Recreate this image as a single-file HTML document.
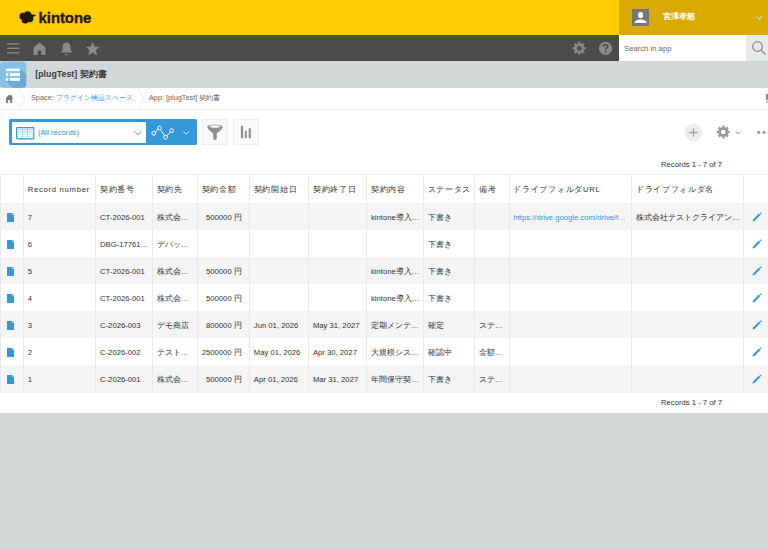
<!DOCTYPE html>
<html><head><meta charset="utf-8">
<style>
*{box-sizing:border-box;margin:0;padding:0}
html,body{width:768px;height:549px;overflow:hidden;background:#d4d7d7;font-family:"Liberation Sans",sans-serif;color:#333}
div,span,svg{position:absolute}
.t{white-space:nowrap;font-size:7.7px;line-height:10px}
.h{white-space:nowrap;font-size:7.7px;line-height:10px;letter-spacing:0.7px;color:#333}
</style></head><body>

<div style="left:0;top:0;width:768px;height:35px;background:#ffcc00"></div>
<div style="left:619px;top:0;width:149px;height:35px;background:#d9ab00"></div>
<svg style="left:19px;top:11px" width="19" height="14" viewBox="0 0 19 14"><g fill="#231815"><circle cx="3.9" cy="5.2" r="3.5"/><circle cx="8.6" cy="4" r="3.7"/><circle cx="10.8" cy="7.6" r="3.6"/><circle cx="6.2" cy="9" r="3.6"/><circle cx="7.5" cy="6.5" r="4"/><path d="M11.5 3 L17.3 4.3 L12.5 6.8Z"/></g></svg>
<div class="t" style="left:38.6px;top:9.6px;font-size:14.9px;line-height:17px;font-weight:bold;color:#231815;letter-spacing:-0.05px;-webkit-text-stroke:0.35px #231815">kintone</div>
<div style="left:632.1px;top:9px;width:17.1px;height:16.8px;background:#757575"></div>
<svg style="left:632px;top:9px" width="18" height="17" viewBox="0 0 18 17"><ellipse cx="8.6" cy="6.1" rx="2.6" ry="3.2" fill="#fff"/><path d="M2.4 14 C2.8 11.6 5 10.9 7 10.4 L10.2 10.4 C12.2 10.9 14.4 11.6 14.8 14Z" fill="#fff"/></svg>
<div class="t" style="left:663px;top:12px;font-size:8.2px;color:#fff;font-weight:bold">宮澤孝慈</div>
<svg style="left:755px;top:15px" width="9" height="6" viewBox="0 0 9 6"><path d="M0.8 0.8 L4.2 4.2 L7.6 0.8" stroke="#fff" stroke-width="1" fill="none"/></svg>
<div style="left:0;top:35px;width:768px;height:26px;background:#4b4b4b"></div>
<svg style="left:6.9px;top:42px" width="13" height="12" viewBox="0 0 13 12"><path d="M0 1.9h12.4M0 6.3h12.4M0 10.8h12.4" stroke="#8a8a8a" stroke-width="1.2"/></svg>
<svg style="left:33px;top:41.5px" width="13" height="13" viewBox="0 0 13 13"><path d="M6.5 0.5 L12.5 5.5 L12.5 13 L8.3 13 L8.3 9 Q6.5 7.5 4.7 9 L4.7 13 L0.5 13 L0.5 5.5Z" fill="#8a8a8a"/></svg>
<svg style="left:59.5px;top:41.5px" width="13" height="14" viewBox="0 0 13 14"><path d="M6.5 0.5 C9.5 0.5 10.5 3 10.5 5.5 L10.5 8.5 L12.5 10.5 L0.5 10.5 L2.5 8.5 L2.5 5.5 C2.5 3 3.5 0.5 6.5 0.5Z" fill="#8a8a8a"/><path d="M4.8 12 L8.2 12 L6.5 13.5Z" fill="#8a8a8a"/></svg>
<svg style="left:85.5px;top:41.8px" width="14" height="14" viewBox="0 0 14 14"><path d="M6.7 0.4 L8.5 4.9 L13.2 5.1 L9.5 8.2 L10.8 13 L6.7 10.3 L2.6 13 L3.9 8.2 L0.2 5.1 L4.9 4.9Z" fill="#8a8a8a" stroke="#8a8a8a" stroke-width="0.5" stroke-linejoin="round"/></svg>
<svg style="left:570px;top:39px" width="18" height="18" viewBox="0 0 18 18"><path d="M15.80 8.17 L15.80 10.43 L14.05 10.52 L13.52 11.79 L14.70 13.10 L13.10 14.70 L11.79 13.52 L10.52 14.05 L10.43 15.80 L8.17 15.80 L8.08 14.05 L6.81 13.52 L5.50 14.70 L3.90 13.10 L5.08 11.79 L4.55 10.52 L2.80 10.43 L2.80 8.17 L4.55 8.08 L5.08 6.81 L3.90 5.50 L5.50 3.90 L6.81 5.08 L8.08 4.55 L8.17 2.80 L10.43 2.80 L10.52 4.55 L11.79 5.08 L13.10 3.90 L14.70 5.50 L13.52 6.81 L14.05 8.08Z" fill="#8a8a8a"/><circle cx="9.3" cy="9.3" r="2.4" fill="#4b4b4b"/></svg>
<svg style="left:598px;top:41px" width="15" height="15" viewBox="0 0 15 15"><circle cx="7.5" cy="7.3" r="6.6" fill="#8a8a8a"/><path d="M5.2 5.6 C5.2 3.2 9.8 3.2 9.8 5.6 C9.8 7.2 7.6 7.2 7.6 8.8" stroke="#4b4b4b" stroke-width="1.6" fill="none"/><circle cx="7.6" cy="11" r="1" fill="#4b4b4b"/></svg>
<div style="left:619px;top:35px;width:127px;height:26px;background:#fff"></div>
<div class="t" style="left:624px;top:44px;font-size:7.7px;color:#666">Search in app</div>
<div style="left:746px;top:35px;width:22px;height:26px;background:#e8e9e9"></div>
<svg style="left:751px;top:40px" width="16" height="16" viewBox="0 0 16 16"><circle cx="6.5" cy="6.5" r="4.8" stroke="#8a8a8a" stroke-width="1.2" fill="none"/><path d="M10 10 L14.5 14.5" stroke="#8a8a8a" stroke-width="1.4"/></svg>
<div style="left:0;top:61px;width:768px;height:27px;background:#d4d7d7"></div>
<svg style="left:0;top:61px" width="27" height="27" viewBox="0 0 27 27"><defs><clipPath id="cp"><rect x="0" y="0.4" width="26.3" height="26.3" rx="3.6"/></clipPath></defs><g clip-path="url(#cp)"><rect x="0" y="0" width="27" height="27" fill="#85c1e8"/><path d="M20.1 7.6 L50 37.5 L36 50 L5.9 19.8 L20.1 19.8Z" fill="#6ea8d3"/></g><g fill="#fff"><rect x="5.9" y="7.6" width="14.2" height="2.5"/><rect x="5.9" y="12.2" width="2.3" height="2.7"/><rect x="9.9" y="12.2" width="10.2" height="2.7"/><rect x="5.9" y="16.9" width="2.3" height="2.9"/><rect x="9.9" y="16.9" width="10.2" height="2.9"/></g></svg>
<div class="t" style="left:35.3px;top:69.4px;font-size:8.8px;line-height:11px;font-weight:bold;color:#3a3a3a">[plugTest] 契約書</div>
<div style="left:0;top:88px;width:768px;height:22px;background:#fff"></div>
<div style="left:0;top:109px;width:768px;height:1.3px;background:#edf0f0"></div>
<svg style="left:5px;top:94px" width="9" height="10" viewBox="0 0 9 10"><path d="M3.2 1.2 L7 1.2 L7 2.6 L8.1 4.6 L7.1 4.6 L7.1 8.9 L5.2 8.9 L5.2 6 L2.9 6 L2.9 8.9 L1.1 8.9 L1.1 4.6 L0.7 4.6Z" fill="#7a7a7a"/></svg>
<svg style="left:18px;top:88px" width="8" height="22" viewBox="0 0 8 22"><path d="M0.5 0 L7 11 L0.5 22" stroke="#e3e6e7" stroke-width="0.9" fill="none"/></svg>
<div class="t" style="left:31px;top:93px;font-size:7.3px;color:#666">Space: <span style="position:static;color:#3498db">プラグイン検証スペース</span></div>
<svg style="left:136.5px;top:88px" width="8" height="22" viewBox="0 0 8 22"><path d="M0.5 0 L7 11 L0.5 22" stroke="#e3e6e7" stroke-width="0.9" fill="none"/></svg>
<div class="t" style="left:149px;top:93px;font-size:7.3px;color:#666">App: [plugTest] 契約書</div>
<div style="left:765.8px;top:94px;width:3px;height:6px;background:#8a8a8a"></div><div style="left:766.2px;top:100.5px;width:2px;height:2.8px;background:#c4c4c4"></div>
<div style="left:0;top:110px;width:768px;height:303px;background:#fff"></div>
<div style="left:9px;top:119.2px;width:188px;height:26px;background:#3498db;border-radius:1.5px"></div>
<div style="left:12px;top:122px;width:134.4px;height:20.5px;background:#fff"></div>
<svg style="left:16px;top:127px" width="19" height="13" viewBox="0 0 19 13"><rect x="0.6" y="0.6" width="17.2" height="11.3" rx="0.8" fill="#fff" stroke="#3498db" stroke-width="1.2"/><rect x="1.2" y="2.2" width="16" height="3" fill="#dcebf7"/><path d="M1.2 2.2H17.2M1.2 5.3H17.2M1.2 7.3H17.2M1.2 9.3H17.2" stroke="#a9d0ee" stroke-width="0.6"/><path d="M6.5 0.6V11.9M11.5 0.6V11.9" stroke="#8fc2ea" stroke-width="0.6"/></svg>
<div class="t" style="left:38px;top:128px;font-size:7.6px;color:#3498db">(All records)</div>
<svg style="left:133.5px;top:130.7px" width="8" height="5" viewBox="0 0 8 5"><path d="M0.6 0.6 L3.9 3.9 L7.2 0.6" stroke="#3498db" stroke-width="0.85" fill="none"/></svg>
<svg style="left:151px;top:125px" width="25" height="16" viewBox="0 0 25 16"><path d="M2.8 8.3 L8.5 2.9 L14.5 12.3 L20.7 5.6" stroke="#fff" stroke-width="1" fill="none"/><g fill="#3498db" stroke="#fff" stroke-width="1"><circle cx="2.8" cy="8.3" r="1.9"/><circle cx="8.5" cy="2.9" r="1.9"/><circle cx="14.5" cy="12.3" r="1.9"/><circle cx="20.7" cy="5.6" r="1.9"/></g></svg>
<svg style="left:182.5px;top:131px" width="7" height="4" viewBox="0 0 7 4"><path d="M0.5 0.5 L3.3 3.3 L6.1 0.5" stroke="#fff" stroke-width="0.9" fill="none"/></svg>
<div style="left:202.2px;top:119px;width:25.6px;height:26.4px;background:#f7f9fa;border:1px solid #eceeef"></div>
<svg style="left:207px;top:124px" width="16" height="17" viewBox="0 0 16 17"><path d="M0.3 3 Q0.6 5.5 6.2 9.2 L6.2 14.6 Q6.2 15.9 8 15.9 Q9.8 15.9 9.8 14.6 L9.8 9.2 Q15.4 5.5 15.7 3Z" fill="#8f8f8f"/><ellipse cx="8" cy="2.8" rx="7.7" ry="2.3" fill="#8f8f8f"/><ellipse cx="8" cy="2.6" rx="5.2" ry="1.25" fill="#fafafa"/></svg>
<div style="left:232.6px;top:119px;width:26.1px;height:26.4px;background:#f7f9fa;border:1px solid #eceeef"></div>
<svg style="left:240px;top:125px" width="12" height="14" viewBox="0 0 12 14"><g fill="#8f8f8f"><rect x="0.9" y="0.8" width="2.2" height="12.4"/><rect x="4.8" y="5.7" width="2" height="7.5"/><rect x="8.7" y="3.3" width="2.2" height="9.9"/></g></svg>
<svg style="left:684.3px;top:122.5px" width="19" height="19" viewBox="0 0 19 19"><circle cx="9.5" cy="9.5" r="8.9" fill="#ededed"/><path d="M9.5 5.2V13.8M5.2 9.5H13.8" stroke="#a0a0a0" stroke-width="1.3"/></svg>
<svg style="left:715px;top:124px" width="17" height="17" viewBox="0 0 17 17"><path d="M14.80 6.87 L14.80 9.13 L13.14 9.24 L12.60 10.55 L13.70 11.80 L12.10 13.40 L10.85 12.30 L9.54 12.84 L9.43 14.50 L7.17 14.50 L7.06 12.84 L5.75 12.30 L4.50 13.40 L2.90 11.80 L4.00 10.55 L3.46 9.24 L1.80 9.13 L1.80 6.87 L3.46 6.76 L4.00 5.45 L2.90 4.20 L4.50 2.60 L5.75 3.70 L7.06 3.16 L7.17 1.50 L9.43 1.50 L9.54 3.16 L10.85 3.70 L12.10 2.60 L13.70 4.20 L12.60 5.45 L13.14 6.76Z" fill="#9a9a9a"/><circle cx="8.3" cy="8" r="2.3" fill="#fff"/></svg>
<svg style="left:734.7px;top:130.7px" width="6" height="4" viewBox="0 0 6 4"><path d="M0.6 0.6 L2.9 2.9 L5.2 0.6" stroke="#999" stroke-width="1" fill="none"/></svg>
<svg style="left:756px;top:129px" width="14" height="6" viewBox="0 0 14 6"><circle cx="2.7" cy="3.3" r="1.6" fill="#9a9a9a"/><circle cx="8" cy="3.3" r="1.6" fill="#9a9a9a"/><circle cx="13.3" cy="3.3" r="1.6" fill="#9a9a9a"/></svg>
<div class="t" style="left:661px;top:159.6px;font-size:7.7px;color:#333">Records 1 - 7 of 7</div>
<div style="left:0;top:174.0px;width:768px;height:29.3px;background:#fff"></div>
<div style="left:0;top:203.3px;width:768px;height:27.0px;background:#f4f4f4"></div>
<div style="left:0;top:230.3px;width:768px;height:27.0px;background:#fff"></div>
<div style="left:0;top:257.3px;width:768px;height:27.0px;background:#f4f4f4"></div>
<div style="left:0;top:284.3px;width:768px;height:27.0px;background:#fff"></div>
<div style="left:0;top:311.3px;width:768px;height:27.0px;background:#f4f4f4"></div>
<div style="left:0;top:338.3px;width:768px;height:27.0px;background:#fff"></div>
<div style="left:0;top:365.3px;width:768px;height:27.0px;background:#f4f4f4"></div>
<div style="left:0;top:173.5px;width:768px;height:1px;background:#eef0f1"></div>
<div style="left:0;top:202.8px;width:768px;height:1px;background:#eef0f1"></div>
<div style="left:0;top:391.8px;width:768px;height:1px;background:#eef0f1"></div>
<div style="left:-0.5px;top:174.0px;width:1px;height:218.3px;background:#e7eaec"></div>
<div style="left:22.9px;top:174.0px;width:1px;height:218.3px;background:#e7eaec"></div>
<div style="left:95.1px;top:174.0px;width:1px;height:218.3px;background:#e7eaec"></div>
<div style="left:151.8px;top:174.0px;width:1px;height:218.3px;background:#e7eaec"></div>
<div style="left:196.8px;top:174.0px;width:1px;height:218.3px;background:#e7eaec"></div>
<div style="left:248.9px;top:174.0px;width:1px;height:218.3px;background:#e7eaec"></div>
<div style="left:308.0px;top:174.0px;width:1px;height:218.3px;background:#e7eaec"></div>
<div style="left:366.1px;top:174.0px;width:1px;height:218.3px;background:#e7eaec"></div>
<div style="left:422.8px;top:174.0px;width:1px;height:218.3px;background:#e7eaec"></div>
<div style="left:474.1px;top:174.0px;width:1px;height:218.3px;background:#e7eaec"></div>
<div style="left:508.5px;top:174.0px;width:1px;height:218.3px;background:#e7eaec"></div>
<div style="left:631.0px;top:174.0px;width:1px;height:218.3px;background:#e7eaec"></div>
<div style="left:743.0px;top:174.0px;width:1px;height:218.3px;background:#e7eaec"></div>
<div class="h" style="left:27.8px;top:184.6px">Record number</div>
<div class="h" style="left:100.0px;top:184.6px">契約番号</div>
<div class="h" style="left:156.7px;top:184.6px">契約先</div>
<div class="h" style="left:201.7px;top:184.6px">契約金額</div>
<div class="h" style="left:253.8px;top:184.6px">契約開始日</div>
<div class="h" style="left:312.9px;top:184.6px">契約終了日</div>
<div class="h" style="left:371.0px;top:184.6px">契約内容</div>
<div class="h" style="left:427.7px;top:184.6px">ステータス</div>
<div class="h" style="left:479.0px;top:184.6px">備考</div>
<div class="h" style="left:513.4px;top:184.6px">ドライブフォルダURL</div>
<div class="h" style="left:635.9px;top:184.6px">ドライブフォルダ名</div>
<svg style="left:7px;top:213.1px" width="8" height="10" viewBox="0 0 8 10"><path d="M0 0 L5.1 0 L7 1.9 L7 9.1 L0 9.1Z" fill="#3498db"/><circle cx="5.3" cy="1.6" r="0.55" fill="#bfe0f5"/></svg>
<svg style="left:751.5px;top:211.6px" width="10" height="10" viewBox="0 0 10 10"><path d="M0.5 9.5 L1.1 7.4 L6.9 1.6 L8.4 3.1 L2.6 8.9Z" fill="#3498db"/><path d="M7.5 1 L8.3 0.2 L9.8 1.7 L9 2.5Z" fill="#3498db"/></svg>
<div class="t" style="left:27.8px;top:212.9px;color:#333">7</div>
<div class="t" style="left:100.0px;top:212.9px;color:#333">CT-2026-001</div>
<div class="t" style="left:156.7px;top:212.9px;color:#333">株式会…</div>
<div class="t" style="left:197.3px;width:44.5px;top:212.9px;text-align:right">500000 円</div>
<div class="t" style="left:371.0px;top:212.9px;color:#333">kintone導入…</div>
<div class="t" style="left:427.7px;top:212.9px;color:#333">下書き</div>
<div class="t" style="left:513.4px;top:212.9px;color:#3498db">https://drive.google.com/drive/f…</div>
<div class="t" style="left:635.9px;top:212.9px;color:#333">株式会社テストクライアン…</div>
<svg style="left:7px;top:240.1px" width="8" height="10" viewBox="0 0 8 10"><path d="M0 0 L5.1 0 L7 1.9 L7 9.1 L0 9.1Z" fill="#3498db"/><circle cx="5.3" cy="1.6" r="0.55" fill="#bfe0f5"/></svg>
<svg style="left:751.5px;top:238.6px" width="10" height="10" viewBox="0 0 10 10"><path d="M0.5 9.5 L1.1 7.4 L6.9 1.6 L8.4 3.1 L2.6 8.9Z" fill="#3498db"/><path d="M7.5 1 L8.3 0.2 L9.8 1.7 L9 2.5Z" fill="#3498db"/></svg>
<div class="t" style="left:27.8px;top:239.9px;color:#333">6</div>
<div class="t" style="left:100.0px;top:239.9px;color:#333">DBG-17761…</div>
<div class="t" style="left:156.7px;top:239.9px;color:#333">デバッ…</div>
<div class="t" style="left:427.7px;top:239.9px;color:#333">下書き</div>
<svg style="left:7px;top:267.1px" width="8" height="10" viewBox="0 0 8 10"><path d="M0 0 L5.1 0 L7 1.9 L7 9.1 L0 9.1Z" fill="#3498db"/><circle cx="5.3" cy="1.6" r="0.55" fill="#bfe0f5"/></svg>
<svg style="left:751.5px;top:265.6px" width="10" height="10" viewBox="0 0 10 10"><path d="M0.5 9.5 L1.1 7.4 L6.9 1.6 L8.4 3.1 L2.6 8.9Z" fill="#3498db"/><path d="M7.5 1 L8.3 0.2 L9.8 1.7 L9 2.5Z" fill="#3498db"/></svg>
<div class="t" style="left:27.8px;top:266.9px;color:#333">5</div>
<div class="t" style="left:100.0px;top:266.9px;color:#333">CT-2026-001</div>
<div class="t" style="left:156.7px;top:266.9px;color:#333">株式会…</div>
<div class="t" style="left:197.3px;width:44.5px;top:266.9px;text-align:right">500000 円</div>
<div class="t" style="left:371.0px;top:266.9px;color:#333">kintone導入…</div>
<div class="t" style="left:427.7px;top:266.9px;color:#333">下書き</div>
<svg style="left:7px;top:294.1px" width="8" height="10" viewBox="0 0 8 10"><path d="M0 0 L5.1 0 L7 1.9 L7 9.1 L0 9.1Z" fill="#3498db"/><circle cx="5.3" cy="1.6" r="0.55" fill="#bfe0f5"/></svg>
<svg style="left:751.5px;top:292.6px" width="10" height="10" viewBox="0 0 10 10"><path d="M0.5 9.5 L1.1 7.4 L6.9 1.6 L8.4 3.1 L2.6 8.9Z" fill="#3498db"/><path d="M7.5 1 L8.3 0.2 L9.8 1.7 L9 2.5Z" fill="#3498db"/></svg>
<div class="t" style="left:27.8px;top:293.9px;color:#333">4</div>
<div class="t" style="left:100.0px;top:293.9px;color:#333">CT-2026-001</div>
<div class="t" style="left:156.7px;top:293.9px;color:#333">株式会…</div>
<div class="t" style="left:197.3px;width:44.5px;top:293.9px;text-align:right">500000 円</div>
<div class="t" style="left:371.0px;top:293.9px;color:#333">kintone導入…</div>
<div class="t" style="left:427.7px;top:293.9px;color:#333">下書き</div>
<svg style="left:7px;top:321.1px" width="8" height="10" viewBox="0 0 8 10"><path d="M0 0 L5.1 0 L7 1.9 L7 9.1 L0 9.1Z" fill="#3498db"/><circle cx="5.3" cy="1.6" r="0.55" fill="#bfe0f5"/></svg>
<svg style="left:751.5px;top:319.6px" width="10" height="10" viewBox="0 0 10 10"><path d="M0.5 9.5 L1.1 7.4 L6.9 1.6 L8.4 3.1 L2.6 8.9Z" fill="#3498db"/><path d="M7.5 1 L8.3 0.2 L9.8 1.7 L9 2.5Z" fill="#3498db"/></svg>
<div class="t" style="left:27.8px;top:320.9px;color:#333">3</div>
<div class="t" style="left:100.0px;top:320.9px;color:#333">C-2026-003</div>
<div class="t" style="left:156.7px;top:320.9px;color:#333">デモ商店</div>
<div class="t" style="left:197.3px;width:44.5px;top:320.9px;text-align:right">800000 円</div>
<div class="t" style="left:253.8px;top:320.9px;color:#333">Jun 01, 2026</div>
<div class="t" style="left:312.9px;top:320.9px;color:#333">May 31, 2027</div>
<div class="t" style="left:371.0px;top:320.9px;color:#333">定期メンテ…</div>
<div class="t" style="left:427.7px;top:320.9px;color:#333">確定</div>
<div class="t" style="left:479.0px;top:320.9px;color:#333">ステ…</div>
<svg style="left:7px;top:348.1px" width="8" height="10" viewBox="0 0 8 10"><path d="M0 0 L5.1 0 L7 1.9 L7 9.1 L0 9.1Z" fill="#3498db"/><circle cx="5.3" cy="1.6" r="0.55" fill="#bfe0f5"/></svg>
<svg style="left:751.5px;top:346.6px" width="10" height="10" viewBox="0 0 10 10"><path d="M0.5 9.5 L1.1 7.4 L6.9 1.6 L8.4 3.1 L2.6 8.9Z" fill="#3498db"/><path d="M7.5 1 L8.3 0.2 L9.8 1.7 L9 2.5Z" fill="#3498db"/></svg>
<div class="t" style="left:27.8px;top:347.9px;color:#333">2</div>
<div class="t" style="left:100.0px;top:347.9px;color:#333">C-2026-002</div>
<div class="t" style="left:156.7px;top:347.9px;color:#333">テスト…</div>
<div class="t" style="left:197.3px;width:44.5px;top:347.9px;text-align:right">2500000 円</div>
<div class="t" style="left:253.8px;top:347.9px;color:#333">May 01, 2026</div>
<div class="t" style="left:312.9px;top:347.9px;color:#333">Apr 30, 2027</div>
<div class="t" style="left:371.0px;top:347.9px;color:#333">大規模シス…</div>
<div class="t" style="left:427.7px;top:347.9px;color:#333">確認中</div>
<div class="t" style="left:479.0px;top:347.9px;color:#333">金額…</div>
<svg style="left:7px;top:375.1px" width="8" height="10" viewBox="0 0 8 10"><path d="M0 0 L5.1 0 L7 1.9 L7 9.1 L0 9.1Z" fill="#3498db"/><circle cx="5.3" cy="1.6" r="0.55" fill="#bfe0f5"/></svg>
<svg style="left:751.5px;top:373.6px" width="10" height="10" viewBox="0 0 10 10"><path d="M0.5 9.5 L1.1 7.4 L6.9 1.6 L8.4 3.1 L2.6 8.9Z" fill="#3498db"/><path d="M7.5 1 L8.3 0.2 L9.8 1.7 L9 2.5Z" fill="#3498db"/></svg>
<div class="t" style="left:27.8px;top:374.9px;color:#333">1</div>
<div class="t" style="left:100.0px;top:374.9px;color:#333">C-2026-001</div>
<div class="t" style="left:156.7px;top:374.9px;color:#333">株式会…</div>
<div class="t" style="left:197.3px;width:44.5px;top:374.9px;text-align:right">500000 円</div>
<div class="t" style="left:253.8px;top:374.9px;color:#333">Apr 01, 2026</div>
<div class="t" style="left:312.9px;top:374.9px;color:#333">Mar 31, 2027</div>
<div class="t" style="left:371.0px;top:374.9px;color:#333">年間保守契…</div>
<div class="t" style="left:427.7px;top:374.9px;color:#333">下書き</div>
<div class="t" style="left:479.0px;top:374.9px;color:#333">ステ…</div>
<div class="t" style="left:661px;top:398.3px;font-size:7.7px;color:#333">Records 1 - 7 of 7</div>
</body></html>
